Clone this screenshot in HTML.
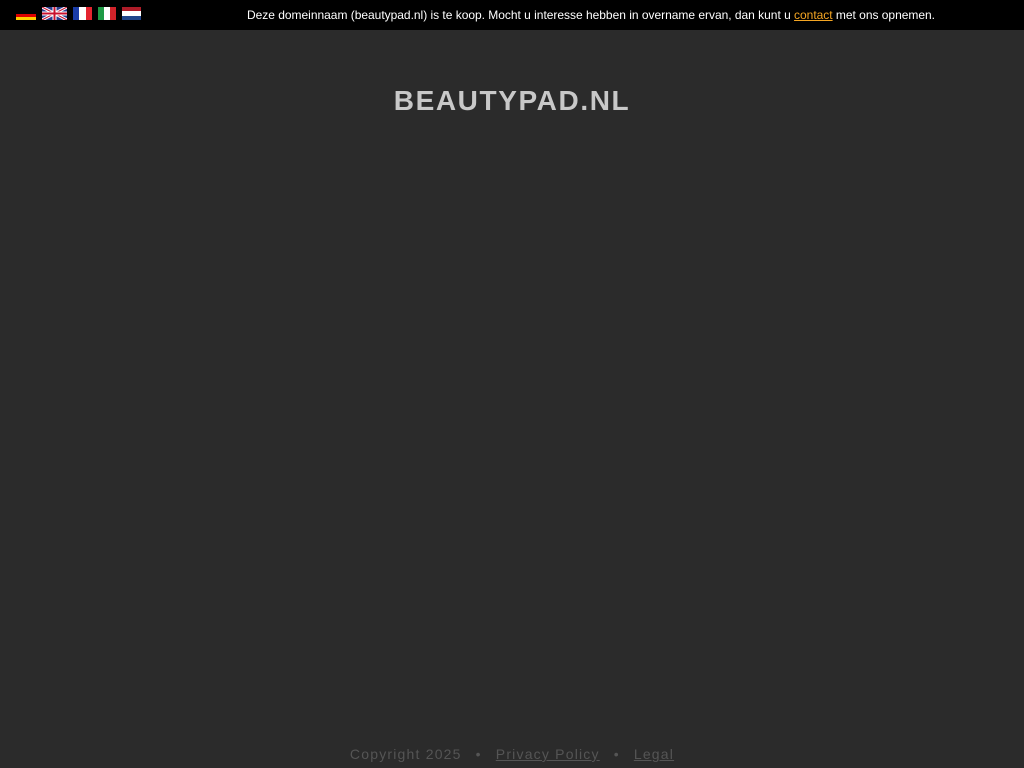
<!DOCTYPE html>
<html><head><meta charset="utf-8"><style>
body{margin:0;background:#2b2b2b;width:1024px;height:768px;overflow:hidden;font-family:"Liberation Sans",Arial,sans-serif;position:relative}
.bar{position:absolute;top:0;left:0;width:1024px;height:30px;background:#000}
.msg{position:absolute;left:247px;top:8px;font-size:12px;color:#fff;white-space:nowrap;letter-spacing:-0.02px}
.msg a{color:#f5a623;text-decoration:underline}
.f{position:absolute}
h1{position:absolute;top:85px;left:0;width:1024px;text-align:center;margin:0;font-size:28px;font-weight:bold;color:#c8c8c8;letter-spacing:1.6px}
.foot{position:absolute;top:746px;left:0;width:1024px;text-align:center;font-size:14px;color:#555;letter-spacing:1.2px}
.foot a{color:#555;text-decoration:underline}
.foot span{margin:0 14px}
</style></head><body>
<div class="bar">
<svg class="f" style="left:16px;top:11px" width="20" height="9"><rect width="20" height="3" fill="#000"/><rect y="3" width="20" height="3" fill="#d00"/><rect y="6" width="20" height="3" fill="#fc0"/></svg>
<svg class="f" style="left:42px;top:7px" width="25" height="13" viewBox="0 0 25 13"><rect width="25" height="13" fill="#2a3d8f"/><path d="M0 0L25 13M25 0L0 13" stroke="#fff" stroke-width="3"/><path d="M0 0L25 13M25 0L0 13" stroke="#c8102e" stroke-width="1"/><path d="M12.5 0V13M0 6.5H25" stroke="#fff" stroke-width="4"/><path d="M12.5 0V13M0 6.5H25" stroke="#c8102e" stroke-width="2"/></svg>
<svg class="f" style="left:73px;top:7px" width="19" height="13"><rect width="6" height="13" fill="#1a3ca8"/><rect x="6" width="7" height="13" fill="#fff"/><rect x="13" width="6" height="13" fill="#e4242f"/></svg>
<svg class="f" style="left:98px;top:7px" width="18" height="13"><rect width="6" height="13" fill="#1e9a45"/><rect x="6" width="6" height="13" fill="#fff"/><rect x="12" width="6" height="13" fill="#d2232a"/></svg>
<svg class="f" style="left:122px;top:7px" width="19" height="13"><rect width="19" height="4" fill="#ae1c28"/><rect y="4" width="19" height="5" fill="#fff"/><rect y="9" width="19" height="4" fill="#21468b"/></svg>
<div class="msg">Deze domeinnaam (beautypad.nl) is te koop. Mocht u interesse hebben in overname ervan, dan kunt u <a>contact</a> met ons opnemen.</div>
</div>
<h1>BEAUTYPAD.NL</h1>
<div class="foot">Copyright 2025<span>•</span><a>Privacy Policy</a><span>•</span><a>Legal</a></div>
</body></html>
